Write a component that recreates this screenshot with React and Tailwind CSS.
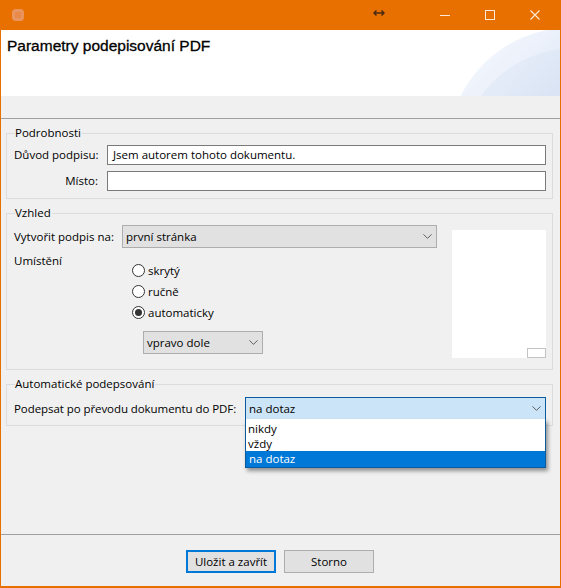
import React from 'react';
import { ChevronDown } from 'lucide-react';

const font = 'font-["Open_Sans","Noto_Sans",sans-serif] text-[11.5px] leading-[16px] text-black';

function Radio({ label, checked }) {
  return (
    <div className="flex h-[21px] items-center gap-[3px]">
      <div className="flex h-[13px] w-[13px] items-center justify-center rounded-full border border-[#333] bg-white">
        {checked && <div className="h-[7px] w-[7px] rounded-full bg-[#333]" />}
      </div>
      <span>{label}</span>
    </div>
  );
}

function Select({ value, className }) {
  return (
    <div className={`flex items-center justify-between border border-[#adadad] bg-[#e1e1e1] pl-[3px] pr-[1px] ${className}`}>
      <span>{value}</span>
      <ChevronDown size={15} strokeWidth={1.2} className="text-[#333]" />
    </div>
  );
}

export default function App() {
  return (
    <div className={`flex h-[588px] w-[561px] flex-col overflow-hidden border-x border-b-2 border-[#e87000] bg-[#f0f0f0] ${font}`}>
      {/* title bar */}
      <div className="-mx-px flex h-[30px] shrink-0 items-center bg-[#e87000] pl-[12px] pr-[4px]">
        <div className="h-[12px] w-[12px] rounded-[4px] border-[3px] border-[#e99560] bg-[#e98a4a]" />
        <svg width="12" height="8" viewBox="0 0 12 8" className="ml-[349px] mb-[5px]">
          <path d="M1 4h10M3.500 1.500 1 4l2.500 2.500M8.500 1.500 11 4 8.500 6.500" fill="none" stroke="#4a2a10" strokeWidth="1.5" />
        </svg>
        <div className="ml-auto flex h-full text-white">
          <div className="flex w-[45px] items-center justify-center">
            <div className="h-px w-[10px] bg-[#ffe9d6]" />
          </div>
          <div className="flex w-[45px] items-center justify-center">
            <div className="h-[10px] w-[10px] border border-[#ffe9d6]" />
          </div>
          <div className="flex w-[45px] items-center justify-center">
            <svg width="10" height="10" viewBox="0 0 10 10">
              <path d="M.5.500l9 9M9.500.500l-9 9" stroke="#ffe9d6" strokeWidth="1.1" />
            </svg>
          </div>
        </div>
      </div>

      {/* header */}
      <div className="relative h-[66px] shrink-0 overflow-hidden bg-white pl-[6px] pt-[7px]">
        <h1 className='font-["Liberation_Sans",sans-serif] text-[15.500px] leading-[18px] font-normal text-black [-webkit-text-stroke:0.3px_black]'>
          Parametry podepisování PDF
        </h1>
        <div className="absolute top-[-2px] right-[-132px] h-[244px] w-[244px] rounded-full bg-gradient-to-br from-[#fafbfe] to-[#b8cced]" />
        <div className="absolute top-[18px] right-[-132px] h-[234px] w-[234px] rounded-full bg-gradient-to-br from-[#f0f4fb] to-[#a8c0e6]" />
      </div>

      <div className="flex min-h-0 flex-1 flex-col border-b border-[#a0a0a0] pt-[22px]">
        <div className="flex flex-1 flex-col border-t border-[#a0a0a0] pl-[5px] pr-[7px] pt-[6px]">
          {/* Podrobnosti */}
          <fieldset className="h-[74px] border border-[#dcdcdc] pl-[7px] pr-[6px]">
            <legend className="ml-[1px] pr-[1px] leading-[16px]">Podrobnosti</legend>
            <div className="mt-[4px] flex h-[20px] items-center">
              <span className="w-[84px] text-right whitespace-nowrap">Důvod podpisu:</span>
              <div className="ml-[9px] flex h-[20px] flex-1 items-center border border-[#7a7a7a] bg-white pl-[5px]">
                Jsem autorem tohoto dokumentu.
              </div>
            </div>
            <div className="mt-[6px] flex h-[20px] items-center">
              <span className="w-[84px] text-right">Místo:</span>
              <div className="ml-[9px] h-[20px] flex-1 border border-[#7a7a7a] bg-white" />
            </div>
          </fieldset>

          {/* Vzhled */}
          <fieldset className="mt-[6px] h-[165px] border border-[#dcdcdc] pl-[7px] pr-[6px]">
            <legend className="ml-[1px] pr-[1px] leading-[16px]">Vzhled</legend>
            <div className="flex">
              <div className="w-[423px]">
                <div className="mt-[4px] flex items-center">
                  <span className="w-[108px]">Vytvořit podpis na:</span>
                  <Select value="první stránka" className="h-[23px] w-[315px]" />
                </div>
                <div className="mt-[5px]">Umístění</div>
                <div className="mt-[-9px] ml-[118px]">
                  <Radio label="skrytý" />
                  <Radio label="ručně" />
                  <Radio label="automaticky" checked />
                </div>
                <Select value="vpravo dole" className="mt-[8px] ml-[129px] h-[23px] w-[120px]" />
              </div>
              <div className="relative mt-[9px] ml-[15px] h-[128px] w-[94px] bg-white">
                <div className="absolute right-0 bottom-0 h-[10px] w-[19px] border border-[#c4c4c4] bg-white" />
              </div>
            </div>
          </fieldset>

          {/* Automaticke podepsovani */}
          <fieldset className="relative mt-[6px] h-[50px] border border-[#dcdcdc] pl-[7px] pr-[6px]">
            <legend className="ml-[1px] pr-[1px] leading-[16px]">Automatické podepsování</legend>
            <div className="mt-[5px] flex items-center">
              <span className="w-[231px] tracking-[-0.07px] whitespace-nowrap">Podepsat po převodu dokumentu do PDF:</span>
              <div className="flex h-[23px] w-[301px] items-center justify-between border border-[#0a5c9e] bg-[#cce4f7] pl-[3px] pr-[1px]">
                <span>na dotaz</span>
                <ChevronDown size={15} strokeWidth={1.2} className="text-[#333]" />
              </div>
            </div>
            <div className="absolute top-[27px] left-[238px] z-10 w-[301px] border border-t-0 border-[#0a5c9e] bg-white text-black shadow-[2px_3px_4px_rgba(0,0,0,0.4)]">
              <div className="h-[17px] pl-[2px] pt-[2px]">nikdy</div>
              <div className="h-[15px] pl-[2px]">vždy</div>
              <div className="h-[16px] bg-[#0078d7] pl-[3px] text-white">na dotaz</div>
            </div>
          </fieldset>
        </div>
      </div>

      {/* buttons */}
      <div className="flex h-[51px] shrink-0 justify-center gap-[8px] pt-[15px] pr-[1px]">
        <button className="h-[23px] w-[90px] border-2 border-[#0078d7] bg-[#e1e1e1]">Uložit a zavřít</button>
        <button className="h-[23px] w-[90px] border border-[#adadad] bg-[#e1e1e1]">Storno</button>
      </div>
    </div>
  );
}
